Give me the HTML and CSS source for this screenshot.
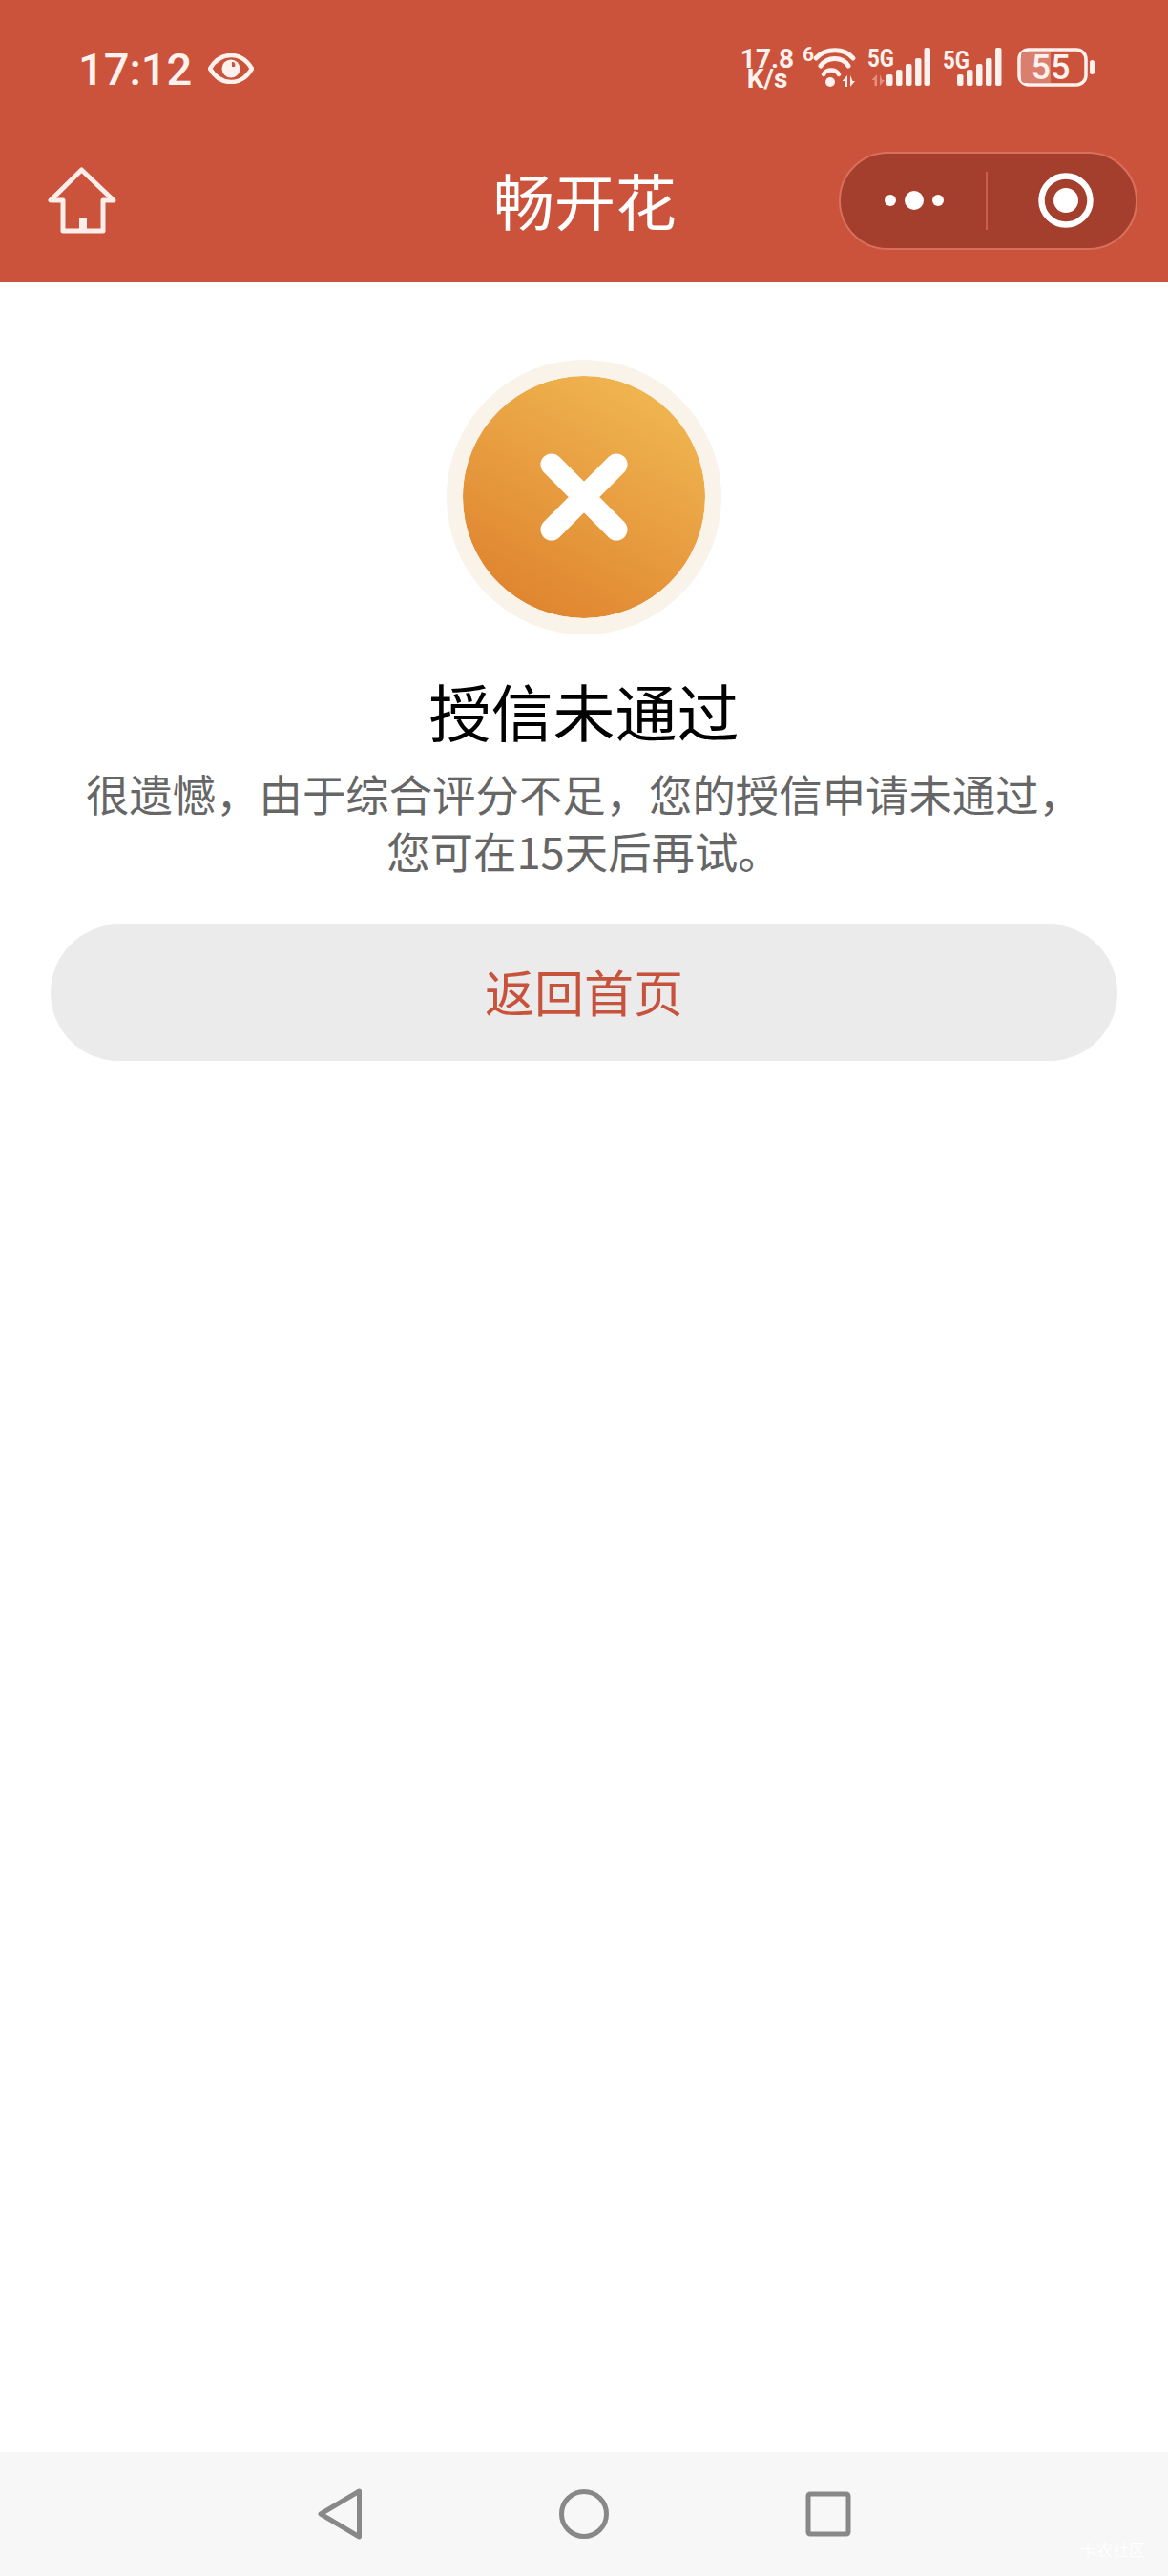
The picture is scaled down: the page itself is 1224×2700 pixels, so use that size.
FILE: index.html
```html
<!DOCTYPE html>
<html>
<head>
    <title>畅开花</title>
    <link rel="stylesheet" href="styles.css">
</head>
<body>
    <div class="page">
        <header class="header">
            <div class="status_bar">
                <span class="time">17:12</span>
                <svg class="eye" viewBox="0 0 48 32" width="48" height="32">
                    <path d="M2 16C8 6 16 2 24 2s16 4 22 14C40 26 32 30 24 30S8 26 2 16z" fill="none" stroke="#fff2ee" stroke-width="4.5" stroke-linejoin="round"/>
                    <circle cx="24" cy="16" r="9.5" fill="#fff2ee"/>
                    <path d="M25 9c3 0 4 2 3 5l-3 0z" fill="#cb523b"/>
                </svg>
                <div class="status_icons">
                    <div class="speed"><span>17.8</span><span>K/s</span></div>
                    <svg viewBox="0 -8 60 60" width="60" height="60">
                        <text class="icon_text" x="0" y="14" font-size="21">6</text>
                        <g fill="none" stroke="#fff2ee" stroke-linecap="round">
                            <path d="M14 11C24 0 44 0 53 11" stroke-width="5"/>
                            <path d="M19 19C26 9 42 9 48 19" stroke-width="5"/>
                            <path d="M22 28C25 22 35 22 38 28" stroke-width="4.500"/>
                        </g>
                        <circle cx="29" cy="36" r="5" fill="#fff2ee"/>
                        <path d="M47 29v12h-2.500v-6h-3zM50 29v12l5-6h-2.500z" fill="#fff2ee"/>
                    </svg>
                    <svg viewBox="0 -8 68 60" width="68" height="60">
                        <text class="icon_text" x="0" y="20" font-size="26" textLength="28" lengthAdjust="spacingAndGlyphs">5G</text>
                        <path d="M10 28v12h-2.500v-6h-3zM13 28v12l5-6h-2.500z" fill="#e68f7e"/>
                        <g fill="#fff2ee">
                            <rect x="20" y="28" width="6.500" height="12" rx="2"/>
                            <rect x="30" y="23" width="6.500" height="17" rx="2"/>
                            <rect x="40" y="17" width="6.500" height="23" rx="2"/>
                            <rect x="50" y="11" width="6.500" height="29" rx="2"/>
                            <rect x="59.500" y="0" width="6.500" height="40" rx="2"/>
                        </g>
                    </svg>
                    <svg viewBox="0 -8 66 60" width="66" height="60">
                        <text class="icon_text" x="3" y="22" font-size="26" textLength="28" lengthAdjust="spacingAndGlyphs">5G</text>
                        <g fill="#fff2ee">
                            <rect x="18" y="28" width="6.500" height="12" rx="2"/>
                            <rect x="28" y="23" width="6.500" height="17" rx="2"/>
                            <rect x="38" y="17" width="6.500" height="23" rx="2"/>
                            <rect x="48" y="11" width="6.500" height="29" rx="2"/>
                            <rect x="58" y="0" width="6.500" height="40" rx="2"/>
                        </g>
                    </svg>
                    <svg viewBox="0 -8 88 60" width="88" height="60">
                        <rect x="9" y="2" width="70" height="37" rx="10" fill="none" stroke="#fff2ee" stroke-width="3.500"/>
                        <path d="M15 4h27v33H15a4 4 0 0 1-4-4V8a4 4 0 0 1 4-4z" fill="#da7f6d"/>
                        <text class="battery_text" x="42" y="33" font-size="36" text-anchor="middle">55</text>
                        <rect x="83" y="13" width="5" height="15" rx="2.500" fill="#fff2ee"/>
                    </svg>
                </div>
            </div>
            <div class="nav_bar">
                <svg class="home" viewBox="0 0 72 70" width="72" height="70">
                    <path d="M35.500 3L3 35h13v32h42V35h11z" fill="none" stroke="#fdeee9" stroke-width="5" stroke-linejoin="round"/>
                    <rect x="33" y="53" width="8" height="14" fill="#fdeee9"/>
                </svg>
                <h1 class="title">畅开花</h1>
                <div class="capsule">
                    <div class="capsule_left">
                        <i class="dot"></i><i class="dot big"></i><i class="dot"></i>
                    </div>
                    <div class="capsule_right">
                        <svg viewBox="0 0 60 60" width="60" height="60">
                            <circle cx="30" cy="30" r="25.500" fill="none" stroke="#fff" stroke-width="6.500"/>
                            <circle cx="30" cy="30" r="13" fill="#fff"/>
                        </svg>
                    </div>
                </div>
            </div>
        </header>
        <main class="content">
            <div class="result_icon">
                <svg viewBox="0 0 100 100" width="92" height="92">
                    <path d="M13 13L87 87M87 13L13 87" stroke="#fff" stroke-width="25" stroke-linecap="round"/>
                </svg>
            </div>
            <h2 class="heading">授信未通过</h2>
            <p class="message">很遗憾，由于综合评分不足，您的授信申请未通过，<br>您可在15天后再试。</p>
            <button class="home_btn">返回首页</button>
        </main>
        <footer class="bottom_nav">
            <svg viewBox="0 0 60 60" width="60" height="60">
                <path d="M50.500 6L10 30l40.500 24z" fill="none" stroke="#888" stroke-width="5" stroke-linejoin="round"/>
            </svg>
            <svg viewBox="0 0 60 60" width="60" height="60">
                <circle cx="30" cy="30" r="23.500" fill="none" stroke="#888" stroke-width="5"/>
            </svg>
            <svg viewBox="0 0 60 60" width="60" height="60">
                <rect x="9" y="9" width="42" height="42" rx="2" fill="none" stroke="#888" stroke-width="5"/>
            </svg>
            <span class="watermark">卡农社区</span>
        </footer>
    </div>
</body>
</html>
```

FILE: styles.css
```css
* {
    padding: 0;
    margin: 0;
    box-sizing: border-box;
}
body {
    width: 100%;
    font-family: "Noto Sans CJK SC", "Liberation Sans", sans-serif;
    background-color: #ffffff;
}
svg {
    display: block;
}
.page {
    position: relative;
    height: 2700px;
    display: flex;
    flex-direction: column;
}
.header {
    height: 296px;
    background-color: #cb523b;
    color: #fff;
}
.status_bar {
    height: 144px;
    padding: 0 77px 0 82px;
    display: flex;
    align-items: center;
}
.time {
    font-family: Roboto, sans-serif;
    font-size: 47px;
    font-weight: 500;
    color: #fff2ee;
}
.eye {
    margin-left: 17px;
}
.status_icons {
    margin-left: auto;
    display: flex;
    align-items: center;
    gap: 8px;
}
.speed {
    width: 58px;
    display: flex;
    flex-direction: column;
    align-items: center;
    font-family: Roboto, sans-serif;
    font-size: 28px;
    font-weight: 700;
    line-height: 21px;
    color: #fff2ee;
}
.icon_text {
    font-family: Roboto, sans-serif;
    font-weight: 700;
    fill: #fff2ee;
}
.battery_text {
    font-family: Roboto, sans-serif;
    font-weight: 500;
    fill: #fff2ee;
}
.nav_bar {
    height: 132px;
    padding: 0 32px;
    display: grid;
    grid-template-columns: minmax(0, 1fr) auto minmax(0, 1fr);
    align-items: center;
}
.home {
    margin-left: 18px;
}
.title {
    margin-top: -4px;
    margin-left: 2px;
    font-size: 64px;
    font-weight: 400;
    line-height: 80px;
    color: #fff;
}
.capsule {
    justify-self: end;
    width: 313px;
    height: 103px;
    display: flex;
    background-color: #a43e2d;
    border: 2px solid #d8705e;
    border-radius: 52px;
}
.capsule_left {
    width: 154px;
    display: flex;
    align-items: center;
    justify-content: center;
    gap: 9px;
    position: relative;
}
.capsule_left::after {
    content: "";
    position: absolute;
    right: 0;
    top: 19px;
    width: 2px;
    height: 61px;
    background-color: #c9604e;
}
.capsule_right {
    flex: 1;
    padding-left: 8px;
    display: flex;
    align-items: center;
    justify-content: center;
}
.dot {
    width: 12px;
    height: 12px;
    border-radius: 50%;
    background-color: #fff;
}
.dot.big {
    width: 20px;
    height: 20px;
}
.content {
    flex: 1;
    padding-top: 81px;
    display: flex;
    flex-direction: column;
    align-items: center;
}
.result_icon {
    width: 288px;
    height: 288px;
    display: flex;
    align-items: center;
    justify-content: center;
    border: 17px solid #f9f3ea;
    border-radius: 50%;
    background: linear-gradient(210deg, #f2bd55 0%, #dd7d2b 100%);
    background-clip: padding-box;
}
.heading {
    margin-top: 37px;
    font-size: 65px;
    font-weight: 400;
    line-height: 84px;
    color: #000;
}
.message {
    margin-top: 15px;
    font-size: 45.400px;
    line-height: 60px;
    text-align: center;
    color: #666;
}
.home_btn {
    margin-top: 48px;
    width: 1118px;
    height: 143px;
    padding-bottom: 4px;
    border: none;
    border-radius: 72px;
    background-color: #ebebeb;
    font-family: inherit;
    font-size: 52px;
    color: #c8533d;
}
.bottom_nav {
    position: relative;
    height: 130px;
    background-color: #f7f7f7;
    display: flex;
    align-items: center;
    justify-content: center;
    gap: 196px;
}
.watermark {
    position: absolute;
    right: 24px;
    bottom: 18px;
    font-size: 17px;
    line-height: 20px;
    color: #fff;
}
```
